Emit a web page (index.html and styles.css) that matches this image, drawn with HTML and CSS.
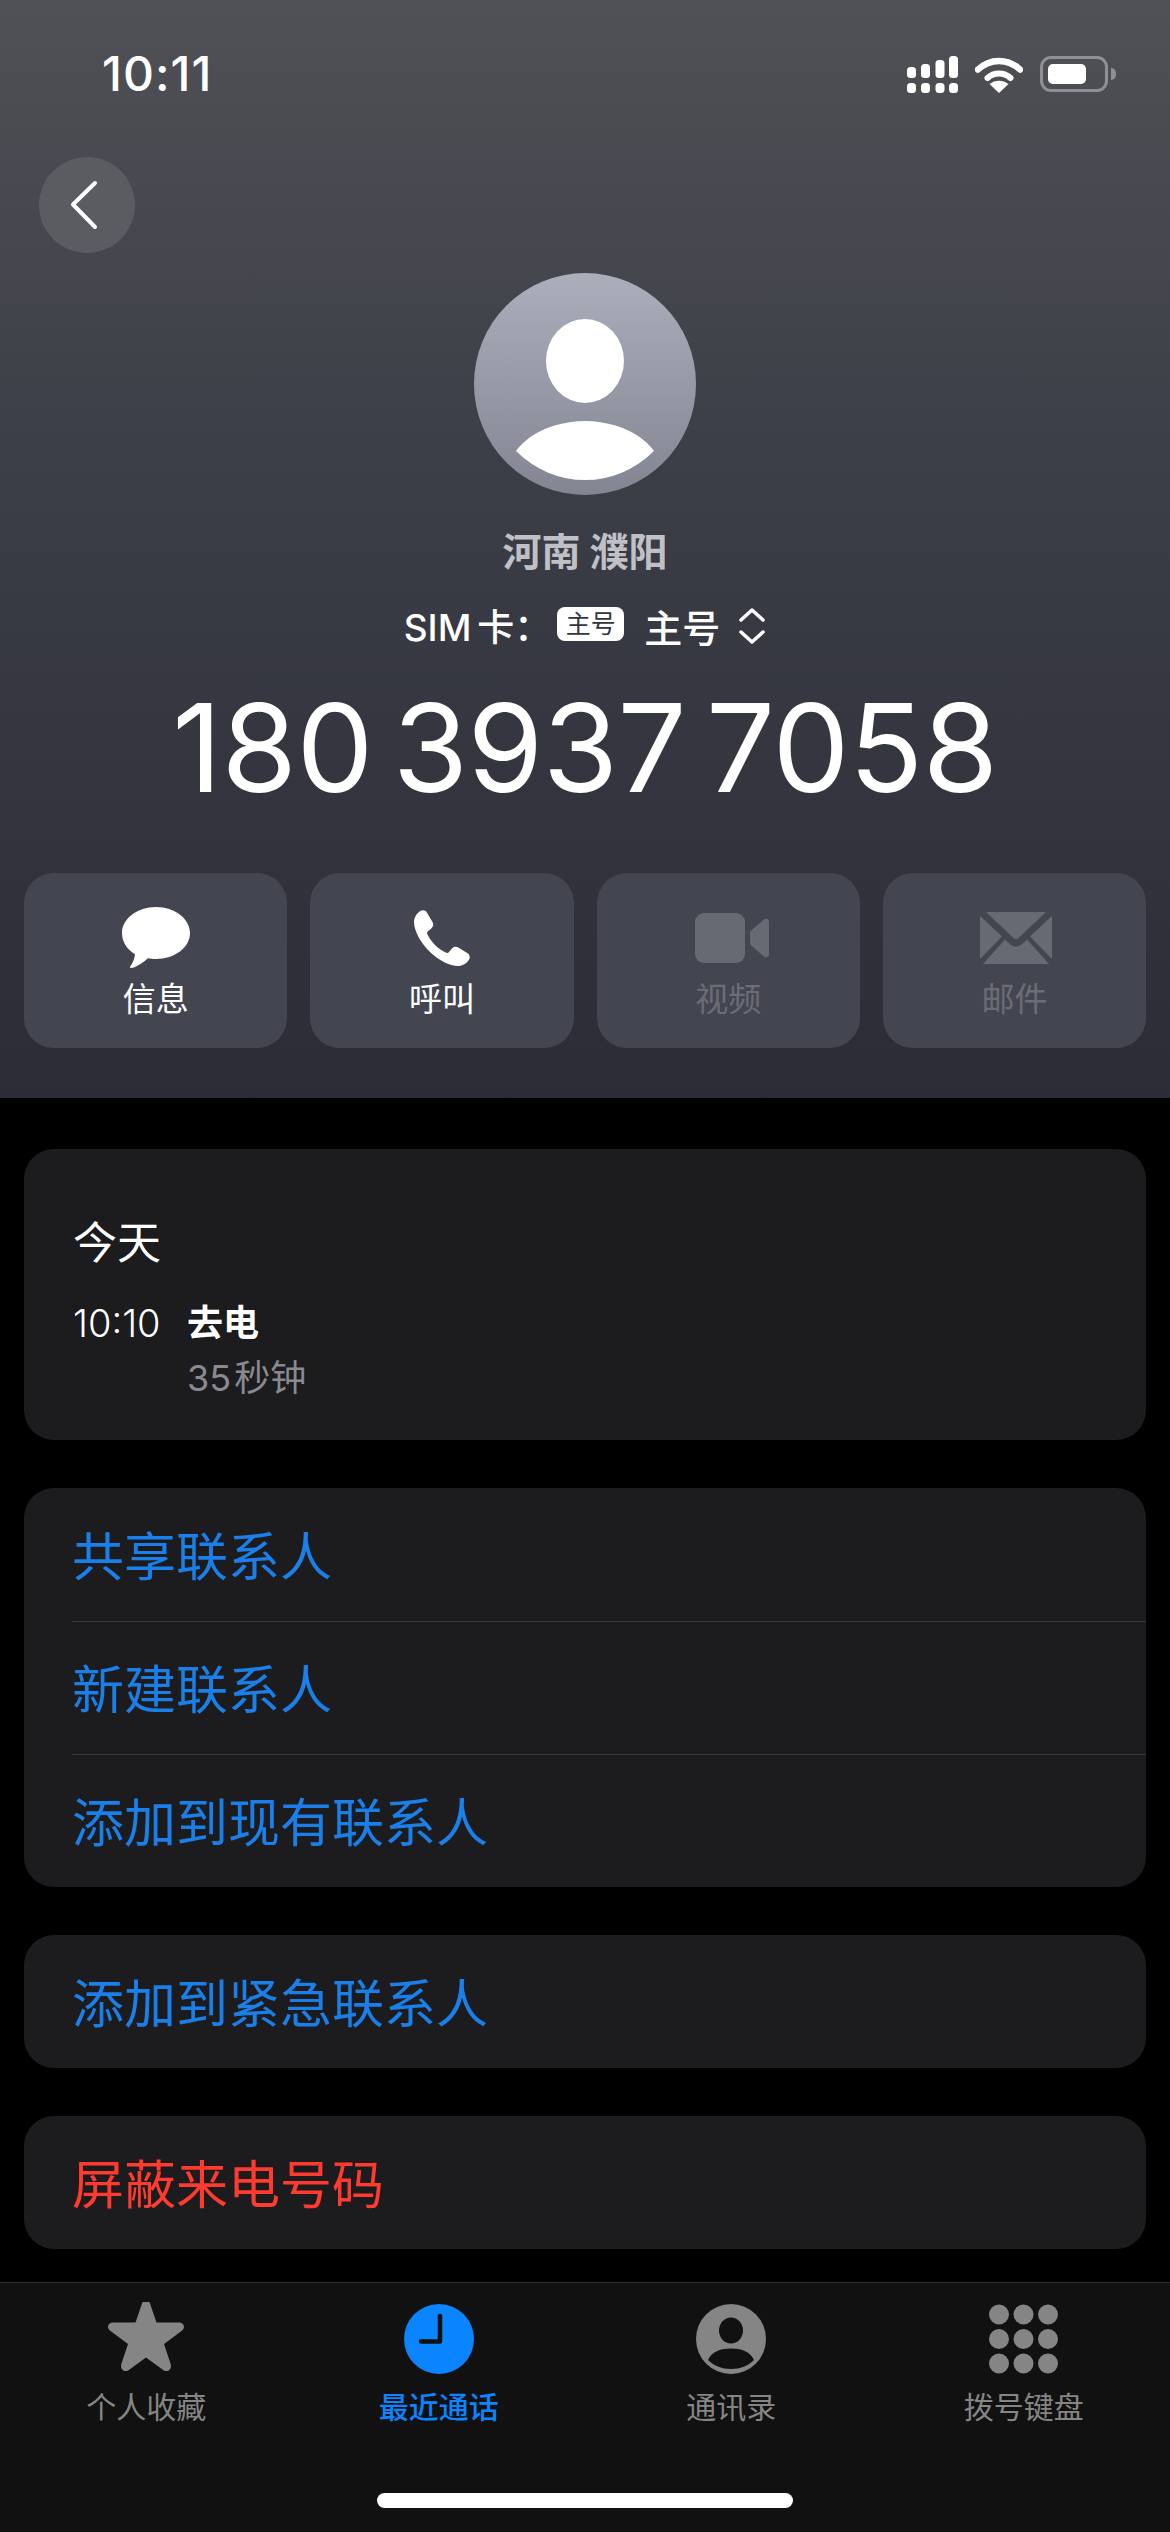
FILE: index.html
```html
<!DOCTYPE html>
<html lang="zh-CN">
<head>
  <meta charset="UTF-8">
  <title>通话详情</title>
  <meta name="viewport" content="width=device-width, initial-scale=1.0">
  <link rel="stylesheet" href="styles.css">
</head>
<body>
  <div class="screen">
    <!-- Top section with gradient -->
    <header class="hero">
      <div class="status-bar">
        <span class="time">10:11</span>
        <div class="status-icons">
          <svg class="signal" width="51" height="37" viewBox="0 0 51 37" fill="#fff">
            <rect x="0" y="11" width="9" height="11" rx="3.5"/>
            <rect x="14" y="8" width="9" height="14" rx="3.5"/>
            <rect x="28.500" y="4" width="9" height="18" rx="3.5"/>
            <rect x="42" y="0" width="9" height="22" rx="3.5"/>
            <rect x="0" y="27" width="9" height="10" rx="3.500"/>
            <rect x="14" y="27" width="9" height="10" rx="3.500"/>
            <rect x="28.500" y="27" width="9" height="10" rx="3.500"/>
            <rect x="42" y="27" width="9" height="10" rx="3.500"/>
          </svg>
          <svg class="wifi" width="48" height="37" viewBox="0 0 48 37" fill="none" stroke="#fff">
            <path d="M3 13.500C15 2 33 2 45 13.500" stroke-width="6.500" stroke-linecap="round"/>
            <path d="M12.500 22C19 16 29 16 35.500 22" stroke-width="6" stroke-linecap="round"/>
            <path d="M24 37L14.500 28C20 23.500 28 23.500 33.500 28Z" fill="#fff" stroke="none"/>
          </svg>
          <div class="battery"><div class="battery-fill"></div></div>
          <div class="battery-nub"></div>
        </div>
      </div>

      <button class="back-btn">
        <svg width="30" height="50" viewBox="0 0 30 50" fill="none" stroke="#fff" stroke-width="4" stroke-linecap="round" stroke-linejoin="round">
          <path d="M26 3L4 24.500L26 47"/>
        </svg>
      </button>

      <div class="avatar">
        <svg width="222" height="222" viewBox="0 0 222 222">
          <defs>
            <linearGradient id="avatarBg" x1="0" y1="0" x2="0" y2="1">
              <stop offset="0" stop-color="#abafbb"/>
              <stop offset="1" stop-color="#838692"/>
            </linearGradient>
            <clipPath id="avatarBody"><circle cx="111" cy="111" r="96"/></clipPath>
          </defs>
          <circle cx="111" cy="111" r="111" fill="url(#avatarBg)"/>
          <ellipse cx="111" cy="88" rx="39" ry="42" fill="#fff"/>
          <ellipse cx="111" cy="208" rx="80" ry="60" fill="#fff" clip-path="url(#avatarBody)"/>
        </svg>
      </div>

      <div class="location">河南 濮阳</div>
      <div class="sim-line">
        <span class="sim-label">SIM 卡：</span>
        <span class="sim-badge">主号</span>
        <span class="sim-name">主号</span>
        <svg width="28" height="38" viewBox="0 0 28 38" fill="none" stroke="#fff" stroke-width="3.500" stroke-linecap="round" stroke-linejoin="round">
          <path d="M3 13L14 3L25 13"/>
          <path d="M3 25L14 35L25 25"/>
        </svg>
      </div>
      <div class="phone-number">180 3937 7058</div>

      <div class="actions">
        <div class="action">
          <svg width="68" height="62" viewBox="0 0 68 62" fill="#fff">
            <path d="M34 0C52.800 0 68 11.800 68 26C68 40.500 52.800 52 34 52C31 52 28.500 51.700 25.800 51.200C21.500 55.500 14 60.500 9 61C8 61 7.700 60 8.300 59.300C10.500 56.500 12.500 52 13 47.200C4.800 42.400 0 34.800 0 26C0 11.800 15.200 0 34 0Z"/>
          </svg>
          <span>信息</span>
        </div>
        <div class="action">
          <svg width="56" height="56" viewBox="0 0 56 56" fill="#fff">
            <path d="M6 1.200C8.500-.3 11.500.2 13 2.800L18.500 12C19.800 14.300 19.300 16.800 17.300 18.500L13.700 21.500C13 22.200 12.800 23 13.300 24C16.800 32 24.500 39.500 32.300 42.800C33.300 43.200 34.200 43 34.800 42.300L37.800 38.700C39.500 36.700 42 36.200 44.300 37.500L53.200 43C55.800 44.500 56.500 47.500 54.800 50C52.500 53.500 48.500 56 44 56C36 56 24 50 15 41C6 32 0 20 0 12C0 7.800 2.500 3.500 6 1.200Z"/>
          </svg>
          <span>呼叫</span>
        </div>
        <div class="action disabled">
          <svg class="icon-video" width="74" height="50" viewBox="0 0 74 50" fill="#686a73">
            <rect x="0" y="0" width="50" height="50" rx="9"/>
            <path d="M55 18.500L69 6.500C71 5 74 6 74 9V41C74 44 71 45 69 43.500L55 31.500Z"/>
          </svg>
          <span>视频</span>
        </div>
        <div class="action disabled">
          <svg class="icon-mail" width="72" height="52" viewBox="0 0 72 52" fill="#686a73">
            <path d="M6 0H66L38.500 26C37 27.400 35 27.400 33.500 26Z"/>
            <path d="M0 4L22 24.500L0 47Z"/>
            <path d="M72 4L50 24.500L72 47Z"/>
            <path d="M3 52L25 27.500L30.500 32.500C33.800 35.200 38.200 35.200 41.500 32.500L47 27.500L69 52Z"/>
          </svg>
          <span>邮件</span>
        </div>
      </div>
    </header>

    <main class="content">
      <section class="card history">
        <div class="history-day">今天</div>
        <div class="history-row">
          <span class="history-time">10:10</span>
          <div class="history-info">
            <div class="history-type">去电</div>
            <div class="history-length">35 秒钟</div>
          </div>
        </div>
      </section>

      <section class="card">
        <div class="row">共享联系人</div>
        <div class="row">新建联系人</div>
        <div class="row">添加到现有联系人</div>
      </section>

      <section class="card">
        <div class="row">添加到紧急联系人</div>
      </section>

      <section class="card">
        <div class="row danger">屏蔽来电号码</div>
      </section>
    </main>

    <!-- Bottom tab bar -->
    <nav class="tab-bar">
      <div class="tabs">
        <div class="tab">
          <svg width="78" height="74" viewBox="0 3 78 74" fill="#858585">
            <path d="M39 1C41 1 42.300 2.300 43 4.500L49.500 23.500H71.500C77 23.500 79 28.500 74.500 32L57 45L63.500 64.500C65.500 70 60.500 74.500 55.500 70.500L39 58.500L22.500 70.500C17.500 74.500 12.500 70 14.500 64.500L21 45L3.500 32C-1 28.500 1 23.500 6.500 23.500H28.500L35 4.500C35.700 2.300 37 1 39 1Z"/>
          </svg>
          <span>个人收藏</span>
        </div>
        <div class="tab active">
          <svg width="70" height="70" viewBox="0 0 70 70">
            <circle cx="35" cy="35" r="35" fill="#0a84ff"/>
            <path d="M36 12V37.500H17" fill="none" stroke="#111" stroke-width="4.500" stroke-linecap="round" stroke-linejoin="round"/>
          </svg>
          <span>最近通话</span>
        </div>
        <div class="tab">
          <svg width="70" height="70" viewBox="0 0 70 70">
            <circle cx="35" cy="35" r="35" fill="#858585"/>
            <ellipse cx="35" cy="26.500" rx="12" ry="13" fill="#111"/>
            <path d="M12 56C16 47 25 44.500 35 44.500C45 44.500 54 47 58 56C52 62 44 65 35 65C26 65 18 62 12 56Z" fill="#111"/>
          </svg>
          <span>通讯录</span>
        </div>
        <div class="tab">
          <svg width="71" height="70" viewBox="0 0 71 70" fill="#858585">
            <circle cx="11" cy="10.500" r="10"/><circle cx="35.500" cy="10.500" r="10"/><circle cx="60" cy="10.500" r="10"/>
            <circle cx="11" cy="35" r="10"/><circle cx="35.500" cy="35" r="10"/><circle cx="60" cy="35" r="10"/>
            <circle cx="11" cy="59.500" r="10"/><circle cx="35.500" cy="59.500" r="10"/><circle cx="60" cy="59.500" r="10"/>
          </svg>
          <span>拨号键盘</span>
        </div>
      </div>
      <div class="home-indicator"></div>
    </nav>
  </div>
</body>
</html>
```

FILE: styles.css
```css
body {
  margin: 0;
  background: #000;
  font-family: Inter, "Noto Sans CJK SC", sans-serif;
  color: #fff;
}
.screen {
  width: 1170px;
  height: 2532px;
  display: flex;
  flex-direction: column;
  overflow: hidden;
}

/* hero */
.hero {
  height: 1098px;
  box-sizing: border-box;
  padding-top: 50px;
  display: flex;
  flex-direction: column;
  background: linear-gradient(180deg, #505156 0%, #3d3f48 40%, #2b2c36 100%);
}
.status-bar {
  height: 48px;
  padding: 0 54px 0 102px;
  display: flex;
  justify-content: space-between;
  align-items: center;
}
.time { font-size: 48px; font-weight: 500; letter-spacing: 1px; line-height: 48px; }
.status-icons { display: flex; align-items: center; }
.wifi { margin-left: 17px; }
.battery {
  margin-left: 17px;
  width: 68px;
  height: 36px;
  box-sizing: border-box;
  padding: 5px;
  border: 3px solid #8f9096;
  border-radius: 11px;
}
.battery-fill { width: 38px; height: 100%; background: #fff; border-radius: 5px; }
.battery-nub {
  margin-left: 3px;
  width: 5px;
  height: 12px;
  background: #8f9096;
  border-radius: 0 6px 6px 0;
}
.back-btn {
  margin: 59px 0 0 39px;
  width: 96px;
  height: 96px;
  padding: 0 6px 0 0;
  border: none;
  border-radius: 50%;
  background: #5b5c62;
  display: flex;
  align-items: center;
  justify-content: center;
}
.avatar { margin: 20px auto 0; width: 222px; height: 222px; }
.avatar svg { display: block; }
.location {
  margin-top: 32px;
  text-align: center;
  font-size: 39px;
  line-height: 50px;
  font-weight: 700;
  color: #c0c1c6;
}
.sim-line {
  margin-top: 23px;
  height: 50px;
  display: flex;
  align-items: center;
  justify-content: center;
  font-weight: 500;
}
.sim-label { font-size: 37px; word-spacing: -4px; }
.sim-badge {
  margin-left: 6px;
  width: 67px;
  height: 34px;
  margin-top: -3px;
  border-radius: 8px;
  background: #fff;
  color: #33353d;
  font-size: 25px;
  font-weight: 400;
  line-height: 34px;
  text-align: center;
}
.sim-name { margin-left: 20px; font-size: 38px; }
.sim-line svg { margin: 2px 0 0 18px; }
.phone-number {
  margin-top: 30px;
  text-align: center;
  font-size: 122px;
  line-height: 136px;
  font-weight: 380;
  letter-spacing: -0.5px;
  word-spacing: -14px;
}
.actions {
  margin-top: 57px;
  padding: 0 24px;
  display: grid;
  grid-template-columns: repeat(4, 1fr);
  gap: 23px;
}
.action {
  height: 175px;
  box-sizing: border-box;
  padding-top: 34px;
  background: #434650;
  border-radius: 30px;
  display: flex;
  flex-direction: column;
  align-items: center;
  justify-content: flex-start;
  position: relative;
  font-size: 33px;
}
.action svg { height: 62px; }
.action .icon-video { margin-left: 8px; }
.action .icon-mail { margin-left: 4px; }
.action span { position: absolute; top: 102px; line-height: 48px; }
.action.disabled { color: #6b6d76; }

/* lists */
.content {
  flex: 1;
  padding: 51px 24px 0;
  display: flex;
  flex-direction: column;
  gap: 48px;
}
.card {
  background: #1c1c1e;
  border-radius: 30px;
  overflow: hidden;
}
.history { height: 291px; box-sizing: border-box; padding: 63px 49px 0; }
.history-day { font-size: 44px; line-height: 62px; }
.history-row { margin-top: 21px; display: flex; }
.history-time { width: 114px; font-size: 38px; line-height: 56px; font-weight: 300; }
.history-type { font-size: 36px; font-weight: 700; line-height: 56px; }
.history-length { margin-top: -1px; font-size: 36px; line-height: 56px; color: #8a8a8e; word-spacing: -7px; }
.row {
  height: 133px;
  margin-left: 48px;
  padding-bottom: 3px;
  box-sizing: border-box;
  display: flex;
  align-items: center;
  font-size: 52px;
  color: #1a7fe8;
  border-top: 1px solid #3a3a3c;
}
.row:first-child { border-top: none; }
.row.danger { color: #ff3b30; }

/* tab bar */
.tab-bar {
  height: 250px;
  box-sizing: border-box;
  background: #111;
  border-top: 1px solid #2e2e2e;
  display: flex;
  flex-direction: column;
}
.tabs {
  display: grid;
  grid-template-columns: repeat(4, 292.5px);
}
.tab {
  height: 210px;
  box-sizing: border-box;
  padding-top: 19px;
  display: flex;
  flex-direction: column;
  align-items: center;
  font-size: 30px;
  color: #858585;
  position: relative;
}
.tab svg { height: 74px; }
.tab span { position: absolute; top: 94px; line-height: 60px; }
.tab.active { color: #0a84ff; font-weight: 500; }
.home-indicator {
  align-self: center;
  width: 416px;
  height: 15px;
  border-radius: 8px;
  background: #fff;
}
```
